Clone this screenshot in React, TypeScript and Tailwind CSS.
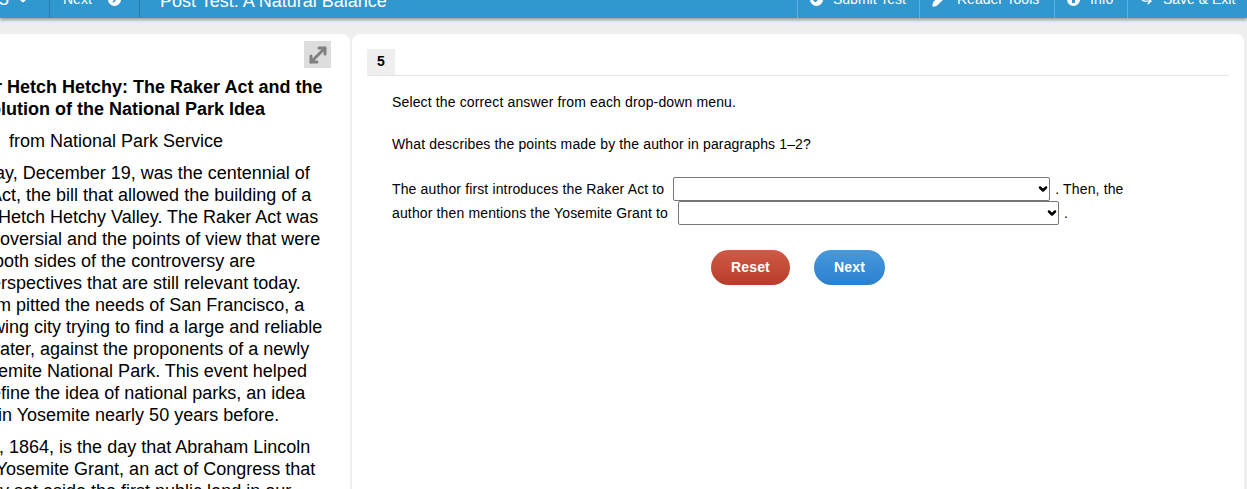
import { ChevronDown, Pencil, ChevronRight, Check, CornerDownRight, MoveDiagonal } from "lucide-react";

// dx nudges each line, the start of every line is hidden past the left edge
const passageOne = [
  { text: "Thursday, December 19, was the centennial of", dx: 1 },
  { text: "Raker Act, the bill that allowed the building of a", dx: 0 },
  { text: "dam in Hetch Hetchy Valley. The Raker Act was", dx: 1 },
  { text: "so controversial and the points of view that were", dx: -2 },
  { text: "felt on both sides of the controversy are", dx: 2 },
  { text: "clear perspectives that are still relevant today.", dx: -1 },
  { text: "The dam pitted the needs of San Francisco, a", dx: 2 },
  { text: "the growing city trying to find a large and reliable", dx: -2 },
  { text: "clean water, against the proponents of a newly", dx: 1 },
  { text: "the Yosemite National Park. This event helped", dx: 1 },
  { text: "then define the idea of national parks, an idea", dx: 3 },
  { text: "formed in Yosemite nearly 50 years before.", dx: -1 },
];

const passageTwo = [
  { text: "June 30, 1864, is the day that Abraham Lincoln", dx: -3 },
  { text: "signed Yosemite Grant, an act of Congress that", dx: 0 },
  { text: "precisely set aside the first public land in our", dx: 0 },
];

const Tool = ({ icon, label, w }: { icon: React.ReactNode; label: string; w: string }) => (
  <div className={`flex items-center gap-[10px] border-l border-[#5fb0dc] pb-[2px] pl-3 ${w}`}>
    {icon}
    <span>{label}</span>
  </div>
);

const Dropdown = ({ w }: { w: string }) => (
  <div className={`relative h-[24px] ${w}`}>
    <select className="h-[24px] w-full appearance-none rounded-[2px] border border-[#767676] bg-white" />
    <ChevronDown size={12} strokeWidth={5} className="pointer-events-none absolute right-[1px] top-[6px]" />
  </div>
);

export default function App() {
  return (
    <div className="h-[489px] w-[1247px] overflow-hidden bg-[#eeeeee] font-['Liberation_Sans',sans-serif] text-black">
      {/* Top bar, scrolled partly off the page */}
      <header className="-mt-[18px] flex h-[36px] items-center bg-[#3097cf] text-[14px] text-white shadow-[0_2px_3px_rgba(0,0,0,0.35)]">
        <div className="flex w-[49px] items-center justify-end gap-[6px] pb-[2px] pr-[18px] text-[19px]">
          <span className="-ml-2">5</span>
          <ChevronDown size={16} strokeWidth={4} />
        </div>
        <div className="flex h-full w-[90px] items-center gap-[16px] border-l border-[#2480b3] pb-[2px] pl-[13px]">
          <span>Next</span>
          <span className="flex h-[13px] w-[13px] items-center justify-center rounded-full bg-white">
            <ChevronRight size={9} strokeWidth={4} className="text-[#3097cf]" />
          </span>
        </div>
        <div className="flex h-full flex-1 items-center border-l border-[#2480b3] pl-[20px] pt-[2px] text-[18px]">
          Post Test: A Natural Balance
        </div>
        <div className="flex h-full">
          <Tool
            w="w-[122px]"
            label="Submit Test"
            icon={
              <span className="flex h-[13px] w-[13px] items-center justify-center rounded-full bg-white">
                <Check size={9} strokeWidth={4} className="text-[#3097cf]" />
              </span>
            }
          />
          <Tool w="w-[135px]" label="Reader Tools" icon={<Pencil size={15} strokeWidth={3} fill="white" />} />
          <Tool
            w="w-[73px]"
            label="Info"
            icon={
              <span className="flex h-[13px] w-[13px] items-center justify-center rounded-full bg-white">
                <span className="h-[7px] w-[3px] bg-[#3097cf]" />
              </span>
            }
          />
          <Tool w="w-[120px]" label="Save & Exit" icon={<CornerDownRight size={13} strokeWidth={2.5} />} />
        </div>
      </header>

      <main className="mt-[16px] flex h-[500px] gap-[2px] pr-[3px]">
        {/* Reading passage, its left edge runs off the page */}
        <section className="-ml-[62px] h-full w-[412px] shrink-0 overflow-hidden rounded-lg bg-white">
          <div className="flex justify-end pr-[19px] pt-[7px]">
            <div className="flex h-[27px] w-[27px] items-center justify-center bg-[#dddddd] text-[#808080]">
              <MoveDiagonal size={24} strokeWidth={3} />
            </div>
          </div>
          <div className="whitespace-nowrap text-[18px] leading-[22px]">
            <h2 className="mt-[8px] font-bold">
              <div>Charter Hetch Hetchy: The Raker Act and the</div>
              <div className="-ml-[2px]">the Evolution of the National Park Idea</div>
            </h2>
            <p className="ml-[71px] mt-[10px]">from National Park Service</p>
            <div className="mt-[10px]">
              {passageOne.map((line) => (
                <div key={line.text} style={{ marginLeft: line.dx }}>{line.text}</div>
              ))}
            </div>
            <div className="mt-[10px]">
              {passageTwo.map((line) => (
                <div key={line.text} style={{ marginLeft: line.dx }}>{line.text}</div>
              ))}
            </div>
          </div>
        </section>

        {/* Question */}
        <section className="h-full flex-1 rounded-lg bg-white px-[15px] pt-[15px]">
          <div className="border-b border-[#e5e5e5]">
            <div className="flex h-[26px] w-[28px] items-center justify-center bg-[#eeeeee] pb-[2px] text-[14px] font-bold">5</div>
          </div>
          <div className="px-[25px] text-[14px] tracking-[0.14px]">
            <p className="mt-[16px]">Select the correct answer from each drop-down menu.</p>
            <p className="mt-[21px]">What describes the points made by the author in paragraphs 1–2?</p>
            <div className="mt-[22px] leading-[24px]">
              <div className="flex h-[24px] items-center gap-[9px]">
                The author first introduces the Raker Act to
                <Dropdown w="w-[377px]" />
                <span className="-ml-[4px]">. Then, the</span>
              </div>
              <div className="flex h-[24px] items-center gap-[10px]">
                author then mentions the Yosemite Grant to
                <Dropdown w="w-[381px]" />
                <span className="-ml-[5px]">.</span>
              </div>
            </div>
            <div className="mt-[25px] flex justify-center gap-[24px] text-[14px] font-bold text-white">
              <button className="h-[35px] w-[79px] rounded-full bg-gradient-to-b from-[#cf5a45] to-[#b83c2a]">Reset</button>
              <button className="h-[35px] w-[71px] rounded-full bg-gradient-to-b from-[#4898da] to-[#2a80cf]">Next</button>
            </div>
          </div>
        </section>
      </main>
    </div>
  );
}
